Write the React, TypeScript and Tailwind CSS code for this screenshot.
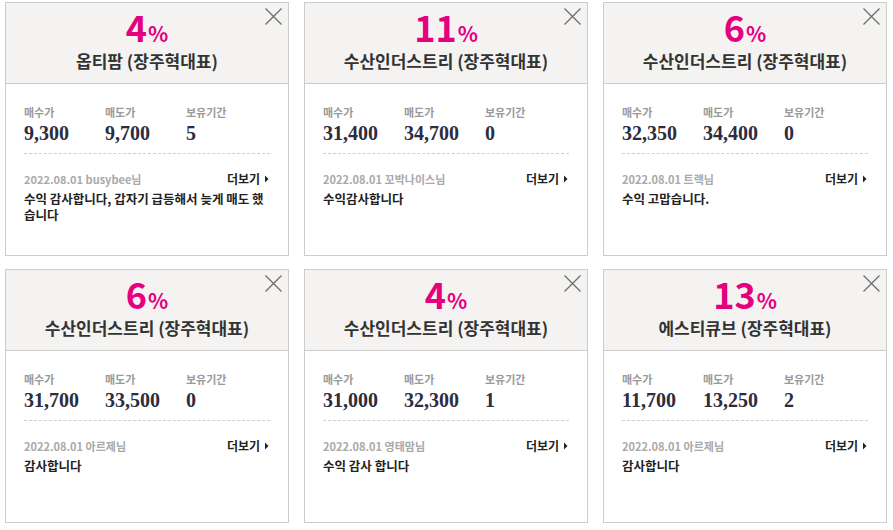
import { FC } from 'react';

interface Review {
  rate: number;
  name: string;
  buy: string;
  sell: string;
  hold: string;
  date: string;
  user: string;
  comment: string;
}

const reviews: Review[] = [
  {
    rate: 4,
    name: '옵티팜 (장주혁대표)',
    buy: '9,300',
    sell: '9,700',
    hold: '5',
    date: '2022.08.01',
    user: 'busybee님',
    comment: '수익 감사합니다, 갑자기 급등해서 늦게 매도 했습니다',
  },
  {
    rate: 11,
    name: '수산인더스트리 (장주혁대표)',
    buy: '31,400',
    sell: '34,700',
    hold: '0',
    date: '2022.08.01',
    user: '꼬박나이스님',
    comment: '수익감사합니다',
  },
  {
    rate: 6,
    name: '수산인더스트리 (장주혁대표)',
    buy: '32,350',
    sell: '34,400',
    hold: '0',
    date: '2022.08.01',
    user: '트랙님',
    comment: '수익 고맙습니다.',
  },
  {
    rate: 6,
    name: '수산인더스트리 (장주혁대표)',
    buy: '31,700',
    sell: '33,500',
    hold: '0',
    date: '2022.08.01',
    user: '아르제님',
    comment: '감사합니다',
  },
  {
    rate: 4,
    name: '수산인더스트리 (장주혁대표)',
    buy: '31,000',
    sell: '32,300',
    hold: '1',
    date: '2022.08.01',
    user: '영태맘님',
    comment: '수익 감사 합니다',
  },
  {
    rate: 13,
    name: '에스티큐브 (장주혁대표)',
    buy: '11,700',
    sell: '13,250',
    hold: '2',
    date: '2022.08.01',
    user: '아르제님',
    comment: '감사합니다',
  },
];

const CloseIcon = () => (
  <svg width="17" height="17" viewBox="0 0 17 17" className="absolute top-[5px] right-[6px]">
    <path d="M0.5 0.5 L16.5 16.5 M16.5 0.5 L0.5 16.5" stroke="#6b6b6b" strokeWidth="1.2" fill="none" />
  </svg>
);

const Stat: FC<{ label: string; value: string }> = ({ label, value }) => (
  <div className="w-[81px]">
    <p className="text-[11px] leading-[14px] font-bold text-[#9a9a9a]">{label}</p>
    <p className="mt-[3px] text-[20px] leading-[22px] font-bold text-[#2d2c40] font-['Liberation_Serif',serif]">
      {value}
    </p>
  </div>
);

const Card: FC<{ r: Review }> = ({ r }) => (
  <div className="relative h-[254px] border border-[#cccccc] bg-white">
    <CloseIcon />
    <div className="h-[81px] bg-[#f4f3f1] border-b border-[#cccccc] flex flex-col items-center">
      <p className="mt-[6px] h-[34px] leading-[34px] font-bold text-[#e4007f]">
        <span className="text-[36px]">{r.rate}</span>
        <span className="text-[21px] ml-[1px]">%</span>
      </p>
      <p className="mt-[8px] text-[17px] leading-[20px] font-bold text-[#333333]">{r.name}</p>
    </div>
    <div className="px-[18px] pt-[21px]">
      <div className="flex">
        <Stat label="매수가" value={r.buy} />
        <Stat label="매도가" value={r.sell} />
        <Stat label="보유기간" value={r.hold} />
      </div>
      <hr className="mt-[9px] border-0 border-t border-dashed border-[#cfcfcf]" />
      <div className="mt-[18px] flex justify-between items-center">
        <span className="text-[11px] leading-[14px] font-bold text-[#a9a9a9]">
          {r.date} {r.user}
        </span>
        <span className="flex items-center text-[12px] leading-[14px] font-bold text-[#222222]">
          더보기
          <svg width="6" height="8" viewBox="0 0 6 8" className="ml-[4px]">
            <path d="M1 0.5 L4.5 4 L1 7.5 Z" fill="#222222" />
          </svg>
        </span>
      </div>
      <p className="mt-[5px] text-[12.5px] leading-[16px] font-bold text-[#222222] break-all">{r.comment}</p>
    </div>
  </div>
);

const App: FC = () => {
  return (
    <div className="w-[893px] h-[530px] bg-white pl-[5px] pt-[2px] font-['Noto_Sans_CJK_KR','Noto_Sans',sans-serif]">
      <div className="grid grid-cols-[284px_284px_284px] gap-x-[15px] gap-y-[13px]">
        {reviews.map((r, i) => (
          <Card key={i} r={r} />
        ))}
      </div>
    </div>
  );
};

export default App;
